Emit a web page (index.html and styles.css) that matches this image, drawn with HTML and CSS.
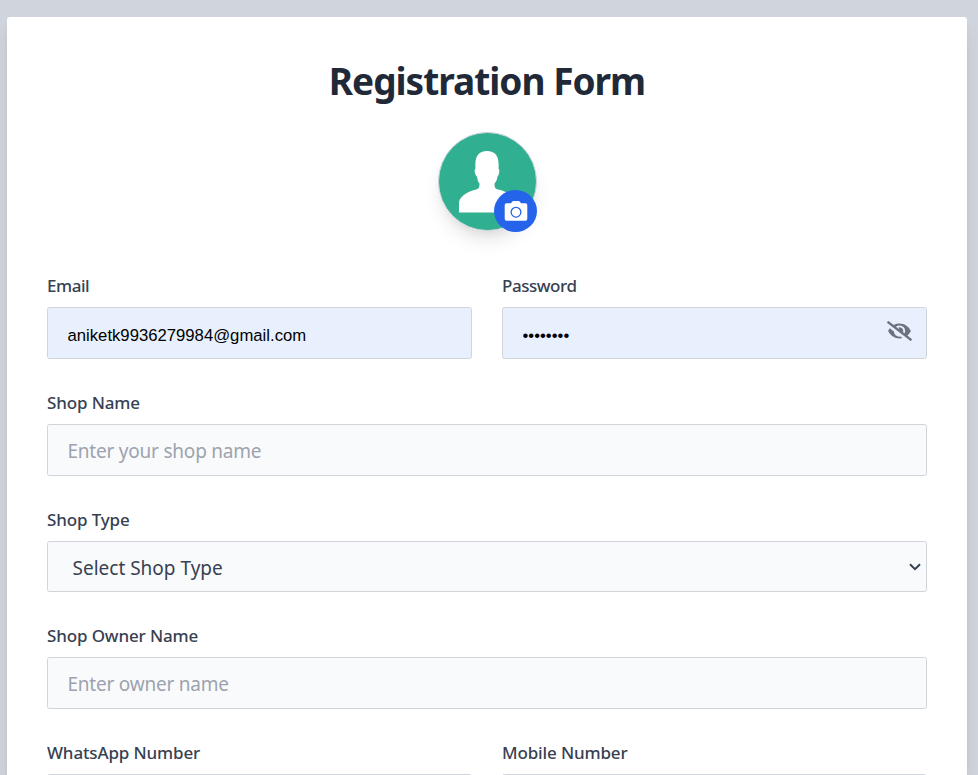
FILE: index.html
```html
<!DOCTYPE html>
<html lang="en">
<head>
<meta charset="utf-8">
<title>Registration Form</title>
<link rel="stylesheet" href="styles.css">
</head>
<body>
<main class="card">
  <h1 class="title">Registration Form</h1>
  <div class="avatar">
    <svg class="portrait" viewBox="0 0 99 99" aria-hidden="true">
      <circle cx="49.5" cy="49.5" r="49" fill="#31af91" stroke="#d1d5db"/>
      <path fill="#fff" d="M21 80.500V70C22 64 31 59 38 57.500C41 57 41.500 55 41.500 51.500C40 50 39.500 48 39 44.500C37.500 44 35.500 38 37.500 36.500C36.500 25 40 19 49 19C58 19 61.500 25 60.500 36.500C62.500 38 60.500 44 59.500 44.500C59 48 58 50 56.500 51.500C56.500 55 57 57 60 57.500C68 59 76 64 77 70V80.500Z"/>
    </svg>
    <button class="camera" type="button" aria-label="Upload photo">
      <svg viewBox="0 0 24 20" aria-hidden="true">
        <path fill="#fff" d="M7.500 1.500Q8 0 9.500 0H14.500Q16 0 16.500 1.500L17 2.200H21.500Q23.300 2.200 23.300 4V18Q23.300 19.800 21.500 19.800H2.500Q.7 19.800 .7 18V4Q.7 2.200 2.500 2.200H7Z"/>
        <circle cx="12" cy="11.200" r="4.900" fill="none" stroke="#2563eb" stroke-width="1.300"/>
      </svg>
    </button>
  </div>
  <form class="form">
    <div class="field half">
      <label class="tight" for="email">Email</label>
      <input class="control filled" id="email" type="text" value="aniketk9936279984@gmail.com">
    </div>
    <div class="field half">
      <label class="tight" for="password">Password</label>
      <div class="password">
        <input class="control filled" id="password" type="text" value="••••••••">
        <svg class="eye" viewBox="0 0 640 512" aria-hidden="true"><path fill="#6b7280" d="M320 400c-75.850 0-137.250-58.710-142.900-133.110L72.200 185.820c-13.790 17.300-26.480 35.590-36.720 55.590a32.350 32.350 0 0 0 0 29.190C89.710 376.410 197.070 448 320 448c26.910 0 52.870-4 77.890-10.460L346 397.390a144.130 144.130 0 0 1-26 2.610zm313.820 58.100l-110.550-85.440a331.250 331.250 0 0 0 81.250-102.070 32.350 32.350 0 0 0 0-29.190C550.290 135.590 442.930 64 320 64a308.150 308.150 0 0 0-147.320 37.700L45.460 3.370A16 16 0 0 0 23 6.180L3.370 31.450A16 16 0 0 0 6.180 53.900l588.360 454.730a16 16 0 0 0 22.460-2.810l19.640-25.270a16 16 0 0 0-2.820-22.450zm-183.720-142l-39.300-30.380A94.750 94.750 0 0 0 416 256a94.760 94.760 0 0 0-121.310-92.210A47.650 47.650 0 0 1 304 192a46.640 46.640 0 0 1-1.540 10l-73.610-56.890A142.310 142.310 0 0 1 320 112a143.920 143.920 0 0 1 144 144c0 21.630-5.290 41.790-13.900 60.110z"/></svg>
      </div>
    </div>
    <div class="field">
      <label for="shop">Shop Name</label>
      <input class="control" id="shop" type="text" placeholder="Enter your shop name">
    </div>
    <div class="field select-field">
      <label for="type">Shop Type</label>
      <div class="control select" id="type">
        <span>Select Shop Type</span>
        <svg viewBox="0 0 12 8" aria-hidden="true"><path d="M1 1.200L6 6.200L11 1.200" fill="none" stroke="#374151" stroke-width="2"/></svg>
      </div>
    </div>
    <div class="field">
      <label for="owner">Shop Owner Name</label>
      <input class="control" id="owner" type="text" placeholder="Enter owner name">
    </div>
    <div class="field half">
      <label for="whatsapp">WhatsApp Number</label>
      <input class="control" id="whatsapp" type="text">
    </div>
    <div class="field half">
      <label for="mobile">Mobile Number</label>
      <input class="control" id="mobile" type="text">
    </div>
  </form>
</main>
</body>
</html>
```
FILE: styles.css
```css
* { box-sizing: border-box; }
html { height: 100%; overflow: hidden; }
body {
  margin: 0;
  height: 775px;
  overflow: hidden;
  padding: 17px 11px 0 7px;
  background: #d0d4dd;
  font-family: "Noto Sans", "Open Sans", sans-serif;
  color: #374151;
}
.card {
  height: 758px;
  overflow: hidden;
  padding: 39px 40px 0;
  background: #fff;
  border-radius: 3px 3px 0 0;
  box-shadow: 0 12px 18px -3px rgba(0, 0, 0, .1), 0 5px 7px -2px rgba(0, 0, 0, .05);
}
.title {
  margin: 0;
  height: 50px;
  line-height: 50px;
  text-align: center;
  font-size: 37px;
  font-weight: 700;
  letter-spacing: -1px;
  color: #1f2937;
  white-space: nowrap;
}
.avatar {
  position: relative;
  width: 99px;
  height: 99px;
  margin: 26px 0 41px 390.500px;
  border-radius: 50%;
  box-shadow: 0 12px 18px -3px rgba(0, 0, 0, .1), 0 5px 7px -2px rgba(0, 0, 0, .05);
}
.portrait { display: block; width: 99px; height: 99px; }
.camera {
  position: absolute;
  right: -.5px;
  bottom: -1px;
  width: 43px;
  height: 42px;
  padding: 0;
  border: 0;
  border-radius: 50%;
  background: #2563eb;
  display: grid;
  place-items: center;
}
.camera svg { width: 24px; height: 20px; }
.form {
  display: grid;
  grid-template-columns: 1fr 1fr;
  column-gap: 30px;
  row-gap: 30px;
}
.field { grid-column: span 2; height: 87px; min-width: 0; }
.field.half { grid-column: span 1; }
.select-field { height: 86px; }
label {
  display: block;
  height: 28px;
  margin-bottom: 7px;
  line-height: 28px;
  font-size: 17px;
  font-weight: 500;
  letter-spacing: -.14px;
  white-space: nowrap;
}
.tight { letter-spacing: -.45px; }
.control {
  display: block;
  width: 100%;
  height: 52px;
  margin: 0;
  padding: 1px 20px 0 19.500px;
  border: 1px solid #d1d5db;
  border-radius: 2.500px;
  background: #f9fafb;
  color: #374151;
  font: 19px "Noto Sans", "Open Sans", sans-serif;
  outline: none;
}
.control::placeholder { color: #9ca3af; opacity: 1; letter-spacing: -.22px; }
.filled {
  padding-top: 5px;
  background: #e8f0fe;
  color: #000;
  font: 16.700px "Liberation Sans", sans-serif;
}
.password { position: relative; }
.eye { position: absolute; right: 15px; top: 14px; width: 25px; height: 20px; }
.select {
  height: 51px;
  padding: 2px 5px 0 24.500px;
  display: flex;
  align-items: center;
  justify-content: space-between;
}
.select svg { width: 12px; height: 8px; margin-top: -2px; }
```
